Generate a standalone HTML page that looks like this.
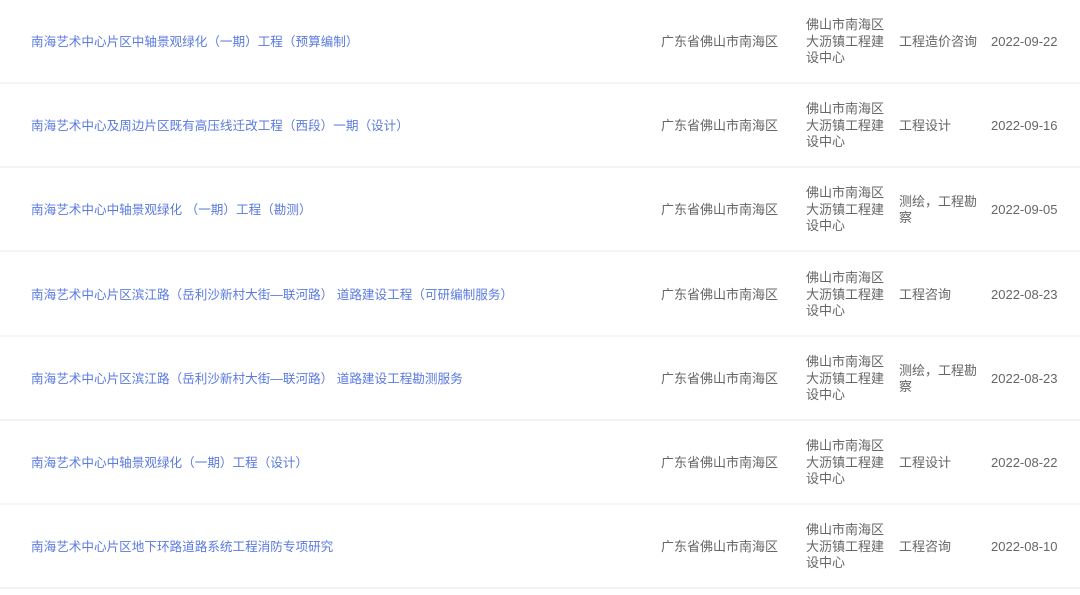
<!DOCTYPE html>
<html><head><meta charset="utf-8"><style>
body{margin:0;width:1080px;height:595px;background:#fff;overflow:hidden;font-family:"Liberation Sans","Noto Sans CJK SC",sans-serif;font-size:13px;color:#666;}
.r{position:absolute;left:0;width:1080px;height:82px;border-bottom:2px solid #f2f4f8;}
.c{position:absolute;top:1px;height:82px;display:flex;align-items:center;line-height:16.5px;}
.t{left:31px;color:#5a7ae0;font-size:12.6px;}
.a{left:661px;}
.o{left:806px;width:82px;}
.k{left:899px;width:84px;}
.d{left:991px;}
</style></head><body>
<div class="r" style="top:0"><div class="c t">南海艺术中心片区中轴景观绿化（一期）工程（预算编制）</div><div class="c a">广东省佛山市南海区</div><div class="c o">佛山市南海区大沥镇工程建设中心</div><div class="c k">工程造价咨询</div><div class="c d">2022-09-22</div></div>
<div class="r" style="top:84px"><div class="c t">南海艺术中心及周边片区既有高压线迁改工程（西段）一期（设计）</div><div class="c a">广东省佛山市南海区</div><div class="c o">佛山市南海区大沥镇工程建设中心</div><div class="c k">工程设计</div><div class="c d">2022-09-16</div></div>
<div class="r" style="top:168px"><div class="c t">南海艺术中心中轴景观绿化 （一期）工程（勘测）</div><div class="c a">广东省佛山市南海区</div><div class="c o">佛山市南海区大沥镇工程建设中心</div><div class="c k">测绘，工程勘察</div><div class="c d">2022-09-05</div></div>
<div class="r" style="top:253px"><div class="c t">南海艺术中心片区滨江路（岳利沙新村大街—联河路） 道路建设工程（可研编制服务）</div><div class="c a">广东省佛山市南海区</div><div class="c o">佛山市南海区大沥镇工程建设中心</div><div class="c k">工程咨询</div><div class="c d">2022-08-23</div></div>
<div class="r" style="top:337px"><div class="c t">南海艺术中心片区滨江路（岳利沙新村大街—联河路） 道路建设工程勘测服务</div><div class="c a">广东省佛山市南海区</div><div class="c o">佛山市南海区大沥镇工程建设中心</div><div class="c k">测绘，工程勘察</div><div class="c d">2022-08-23</div></div>
<div class="r" style="top:421px"><div class="c t">南海艺术中心中轴景观绿化（一期）工程（设计）</div><div class="c a">广东省佛山市南海区</div><div class="c o">佛山市南海区大沥镇工程建设中心</div><div class="c k">工程设计</div><div class="c d">2022-08-22</div></div>
<div class="r" style="top:505px"><div class="c t">南海艺术中心片区地下环路道路系统工程消防专项研究</div><div class="c a">广东省佛山市南海区</div><div class="c o">佛山市南海区大沥镇工程建设中心</div><div class="c k">工程咨询</div><div class="c d">2022-08-10</div></div>
</body></html>
